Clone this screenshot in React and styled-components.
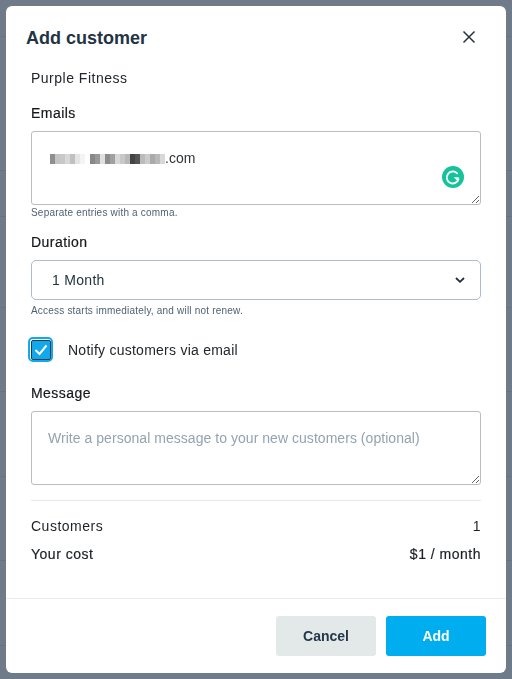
import React from 'react';
import styled, { createGlobalStyle } from 'styled-components';

const GlobalStyle = createGlobalStyle`
  html, body {
    margin: 0;
    padding: 0;
    background: #6f7b89;
  }
  body {
    font-family: "Liberation Sans", Arial, sans-serif;
    color: #1a1f24;
  }
  * { box-sizing: border-box; }
`;

// faint table rows of the page behind the overlay
const Backdrop = styled.div`
  position: fixed;
  inset: 0;
  overflow: hidden;
`;

const BackdropRow = styled.div`
  height: ${({ h }) => h}px;
  border-bottom: 1px solid #66727f;
`;

const Page = styled.div`
  position: relative;
  width: 512px;
  height: 679px;
  padding: 6px;
`;

const Modal = styled.div`
  width: 500px;
  height: 667px;
  background: #fff;
  border-radius: 6px;
  display: flex;
  flex-direction: column;
`;

const Header = styled.div`
  height: 62px;
  padding: 0 30px 0 20px;
  display: flex;
  align-items: center;
  justify-content: space-between;
`;

const Title = styled.h1`
  margin: 2px 0 0;
  font-size: 18px;
  line-height: 24px;
  font-weight: 700;
  color: #1f3444;
`;

const Body = styled.div`
  flex: 1;
  padding: 0 25px;
`;

const Company = styled.div`
  font-size: 14px;
  line-height: 20px;
  letter-spacing: 0.5px;
  color: #22272c;
`;

const Label = styled.div`
  margin-top: ${({ top }) => top}px;
  font-size: 14px;
  line-height: 20px;
  letter-spacing: 0.45px;
  -webkit-text-stroke: 0.2px #16191c;
  color: #16191c;
`;

const Hint = styled.div`
  margin-top: ${({ top }) => top}px;
  font-size: 10px;
  line-height: 12px;
  letter-spacing: 0.2px;
  color: #4f6272;
`;

const AreaWrap = styled.div`
  position: relative;
  margin-top: 8px;
  height: 74px;
`;

const Area = styled.textarea`
  display: block;
  width: 100%;
  height: 74px;
  margin: 0;
  padding: 16px 16px;
  border: 1px solid #bcbcbc;
  border-radius: 3px;
  background: #fff;
  outline: none;
  font-family: "Liberation Sans", Arial, sans-serif;
  font-size: 14px;
  line-height: 20px;
  letter-spacing: 0.04px;
  color: #1a1f24;

  &::placeholder {
    color: #94a3b0;
    opacity: 1;
  }
`;

const TypedEmail = styled.div`
  position: absolute;
  left: 19px;
  top: 17px;
  display: flex;
  align-items: center;
  font-size: 14px;
  line-height: 20px;
  color: #30353a;
`;

const Mosaic = styled.span`
  display: flex;
  height: 10px;
  margin-top: 1px;
`;

const MosaicCell = styled.span`
  width: 5px;
  height: 10px;
  background: ${({ c }) => c};
`;

const GrammarlyBadge = styled.svg`
  position: absolute;
  right: 17px;
  top: 35px;
`;

const SelectBox = styled.div`
  margin-top: 8px;
  height: 40px;
  padding: 0 14px 0 20px;
  border: 1px solid #adbccb;
  border-radius: 5px;
  display: flex;
  align-items: center;
  justify-content: space-between;
  font-size: 14px;
  letter-spacing: 0.3px;
  color: #24343f;
`;

const CheckRow = styled.div`
  margin-top: 20px;
  margin-left: -3px;
  display: flex;
  align-items: center;
  gap: 15px;
  font-size: 14px;
  letter-spacing: 0.25px;
  color: #22272c;
`;

const CheckRing = styled.span`
  width: 25px;
  height: 25px;
  border: 2px solid #10a9ee;
  border-radius: 5px;
  background: #fff;
  display: flex;
  align-items: center;
  justify-content: center;
`;

const CheckBox = styled.span`
  width: 20px;
  height: 20px;
  border: 1px solid #2c3a46;
  border-radius: 2px;
  background: #12a8ec;
  display: flex;
  align-items: center;
  justify-content: center;
`;

const Divider = styled.div`
  margin-top: 15px;
  height: 1px;
  background: #e6e9ea;
`;

const SummaryRow = styled.div`
  margin-top: ${({ top }) => top}px;
  height: 20px;
  display: flex;
  align-items: center;
  justify-content: space-between;
  font-size: 14px;
  letter-spacing: 0.5px;
  -webkit-text-stroke: ${({ strong }) => (strong ? '0.2px #1d2125' : '0')};
  color: #1d2125;
`;

const Footer = styled.div`
  height: 75px;
  border-top: 1px solid #ebedee;
  padding: 17px 20px 0 0;
  display: flex;
  justify-content: flex-end;
  gap: 10px;
`;

const Button = styled.button`
  width: 100px;
  height: 40px;
  border: 0;
  border-radius: 3px;
  padding: 0;
  background: ${({ primary }) => (primary ? '#00aeef' : '#e3e8e8')};
  color: ${({ primary }) => (primary ? '#fff' : '#24384a')};
  font-family: "Liberation Sans", Arial, sans-serif;
  font-size: 14px;
  font-weight: 700;
`;

const backdropRows = [37, 134, 46, 91, 84, 85, 84, 85];

const mosaicCells = [
  '#8f8f8f', '#c4c4c4', '#c8c8c8', '#d8d8d8', '#c0c0c0', '#e4e4e4', '#f4f4f4', '#fff',
  '#888', '#999', '#e0e0e0', '#8c8c8c', '#a0a0a0', '#d8d8d8', '#c8c8c8', '#b8b8b8',
  '#444', '#555', '#bbb', '#ccc', '#aaa', '#b8b8b8', '#d8d8d8',
];

export default function App() {
  return (
    <>
      <GlobalStyle />
      <Backdrop>
        {backdropRows.map((h, i) => <BackdropRow key={i} h={h} />)}
      </Backdrop>
      <Page>
        <Modal>
          <Header>
            <Title>Add customer</Title>
            <svg width="14" height="14" viewBox="0 0 14 14" fill="none" stroke="#24333f" strokeWidth="1.5">
              <path d="M1.5 1.5l11 11M12.5 1.5l-11 11" />
            </svg>
          </Header>
          <Body>
            <Company>Purple Fitness</Company>
            <Label top={15}>Emails</Label>
            <AreaWrap>
              <Area aria-label="Emails" />
              <TypedEmail>
                <Mosaic>
                  {mosaicCells.map((c, i) => <MosaicCell key={i} c={c} />)}
                </Mosaic>
                .com
              </TypedEmail>
              <GrammarlyBadge width="22" height="22" viewBox="0 0 22 22">
                <circle cx="11" cy="11" r="11" fill="#15c39a" />
                <path d="M15.2 7.4A6 6 0 1 0 16.6 13" fill="none" stroke="#fff" strokeWidth="1.8" strokeLinecap="round" />
                <path d="M11.8 11.2h5l-.9 4.2z" fill="#fff" />
              </GrammarlyBadge>
            </AreaWrap>
            <Hint top={2}>Separate entries with a comma.</Hint>
            <Label top={13}>Duration</Label>
            <SelectBox>
              1 Month
              <svg width="12" height="8" viewBox="0 0 12 8" fill="none" stroke="#1f2e3a" strokeWidth="1.8">
                <path d="M2 2l4 3.8L10 2" />
              </svg>
            </SelectBox>
            <Hint top={5}>Access starts immediately, and will not renew.</Hint>
            <CheckRow>
              <CheckRing>
                <CheckBox>
                  <svg width="14" height="12" viewBox="0 0 14 12" fill="none" stroke="#fff" strokeWidth="2">
                    <path d="M1.5 6l4 4 7-8.5" />
                  </svg>
                </CheckBox>
              </CheckRing>
              Notify customers via email
            </CheckRow>
            <Label top={21}>Message</Label>
            <AreaWrap>
              <Area placeholder="Write a personal message to your new customers (optional)" />
            </AreaWrap>
            <Divider />
            <SummaryRow top={15}><span>Customers</span><span>1</span></SummaryRow>
            <SummaryRow top={8} strong><span>Your cost</span><span>$1 / month</span></SummaryRow>
          </Body>
          <Footer>
            <Button>Cancel</Button>
            <Button primary>Add</Button>
          </Footer>
        </Modal>
      </Page>
    </>
  );
}
